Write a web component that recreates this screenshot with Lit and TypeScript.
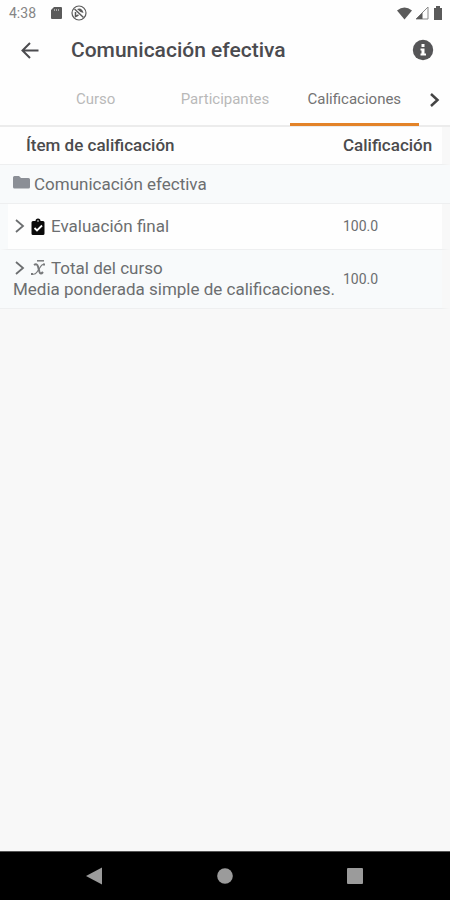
import { LitElement, html, css, svg } from "lit";
import { customElement, state } from "lit/decorators.js";

const TABS = ["Curso", "Participantes", "Calificaciones"];

const chevron = svg`<path d="M3 1 L10 7 L3 13" fill="none" stroke="currentColor" stroke-width="1.800"/>`;

@customElement("app-root")
export class AppRoot extends LitElement {
  @state() private selected = "Calificaciones";

  static styles = css`
    :host {
      display: flex;
      flex-direction: column;
      min-height: 100vh;
      background: #f8f8f8;
      color: #6c6e70;
      font-family: Roboto, "Liberation Sans", sans-serif;
      font-size: 17px;
      line-height: 21px;
    }
    * { box-sizing: border-box; }
    button {
      border: 0;
      padding: 0;
      margin: 0;
      background: none;
      color: inherit;
      font: inherit;
      cursor: pointer;
    }
    svg { display: block; flex: none; }
    .status {
      display: flex;
      align-items: center;
      height: 26px;
      padding: 0 6px 0 9px;
      background: #fefefe;
      color: #5a5a5a;
    }
    .time { font-size: 14px; color: #858585; width: 32px; }
    .left, .right { display: flex; align-items: center; gap: 8px; }
    .right { margin-left: auto; gap: 3px; }
    .bar {
      display: flex;
      align-items: center;
      height: 48px;
      padding: 0 16px;
      background: #fefefe;
      color: #4b4b4f;
    }
    .back { width: 28px; height: 28px; display: grid; place-items: center; }
    .title {
      flex: 1;
      margin: 0 0 0 27px;
      font-size: 21px;
      line-height: 28px;
      font-weight: 500;
      color: #4b4b4f;
    }
    .tabs {
      display: grid;
      grid-template-columns: 31px repeat(3, 1fr) 31px;
      height: 53px;
      background: #fefefe;
      border-bottom: 2px solid #ececec;
    }
    .tab {
      height: 52px;
      border-bottom: 3px solid transparent;
      font-size: 15px;
      color: #b9b9b9;
      padding-top: 2px;
    }
    .tab.active { color: #737373; border-bottom-color: #e38328; }
    .next { grid-column: 5; display: grid; place-items: center; color: #444; }
    .grades { width: 100%; border-collapse: separate; border-spacing: 0; }
    .grades th, .grades td {
      padding: 0;
      text-align: left;
      border-bottom: 1px solid #eeeff0;
      font-weight: 400;
    }
    .grades .value {
      width: 107px;
      border-right: 8px solid #f8f8f8;
      font-size: 14px;
    }
    .head th { height: 38px; background: #fefefe; }
    .grades .head th { font-weight: 500; color: #4b4b4d; font-size: 17px; }
    .head .item { padding-left: 26px; }
    .grades .category th { height: 39px; padding-left: 13px; background: #f8fafb; }
    .grades .entry th { height: 46px; padding-left: 5px; border-left: 8px solid #f8fafb; background: #fefefe; }
    .entry td { background: #fefefe; }
    .grades .total th { height: 59px; padding-left: 13px; background: #f8fafb; }
    .total td { background: #f8fafb; }
    .line { display: flex; align-items: center; }
    .category .line { gap: 4px; }
    .toggle { display: flex; align-items: center; text-align: left; gap: 5px; }
    .nav {
      display: flex;
      justify-content: space-around;
      align-items: center;
      height: 49px;
      margin-top: auto;
      padding: 0 30px;
      background: #000;
      color: #9b9b9b;
      border-top: 1px solid #555;
    }
    .key { width: 48px; height: 40px; display: grid; place-items: center; }
  `;

  private statusBar() {
    return html`
      <div class="status">
        <div class="left">
          <span class="time">4:38</span>
          <svg width="14" height="14" viewBox="0 0 14 14" aria-hidden="true">
            <path d="M5 1h7q1 0 1 1v10q0 1-1 1H3q-1 0-1-1V4z" fill="currentColor"/>
            <path d="M5.500 3v2M7.500 3v2M9.500 3v2" stroke="#aaa"/>
          </svg>
          <svg width="16" height="16" viewBox="0 0 16 16" aria-hidden="true" fill="none" stroke="currentColor">
            <circle cx="8" cy="8" r="7" stroke-width="1.200"/>
            <path d="M3.500 4l9 8.500" stroke-width="1.400"/>
            <path d="M6 4q5-2 6.500 4L9.500 7z" fill="currentColor" stroke="none"/>
            <path d="M4.500 7v4.500l3-1.500" stroke-width="1.500"/>
          </svg>
        </div>
        <div class="right">
          <svg width="15" height="13" viewBox="0 0 15 13" aria-hidden="true">
            <path d="M0 3.500Q7.500-2.500 15 3.500L7.500 12.500z" fill="currentColor"/>
          </svg>
          <svg width="14" height="14" viewBox="0 0 14 14" aria-hidden="true">
            <path d="M1 13L13 1V13z" fill="none" stroke="#8a8a8a"/>
            <path d="M1 13L7.500 6.500V13z" fill="currentColor"/>
          </svg>
          <svg width="12" height="14" viewBox="0 0 12 14" aria-hidden="true" class="battery">
            <path d="M2 2h2V0h4v2h2v12H2z" fill="currentColor"/>
          </svg>
        </div>
      </div>`;
  }

  render() {
    return html`
      ${this.statusBar()}
      <header class="bar">
        <button class="back" aria-label="Atrás">
          <svg width="20" height="18" viewBox="0 0 20 18" fill="none" stroke="currentColor" stroke-width="2">
            <path d="M18.500 9.500H3M10 2L2.500 9.500l7.500 7.500"/>
          </svg>
        </button>
        <h1 class="title">Comunicación efectiva</h1>
        <button aria-label="Información">
          <svg width="22" height="22" viewBox="0 0 22 22">
            <circle cx="11" cy="11" r="10.200" fill="#555557"/>
            <path d="M9.500 5h3v3h-3zM8.500 9.500h4v5h1.500v2H8.500v-2h1v-3h-1z" fill="#fff"/>
          </svg>
        </button>
      </header>
      <nav class="tabs" role="tablist">
        <span></span>
        ${TABS.map(
          (t) => html`<button
            class="tab ${t === this.selected ? "active" : ""}"
            role="tab"
            aria-selected=${t === this.selected}
            @click=${() => (this.selected = t)}
          >${t}</button>`
        )}
        <button class="next" aria-label="Siguiente">
          <svg width="12" height="16" viewBox="0 0 12 16" fill="none" stroke="currentColor" stroke-width="2.500">
            <path d="M3 2l6.500 6L3 14"/>
          </svg>
        </button>
      </nav>
      <table class="grades">
        <thead>
          <tr class="head">
            <th class="item" scope="col">Ítem de calificación</th>
            <th class="value" scope="col">Calificación</th>
          </tr>
        </thead>
        <tbody>
          <tr class="category">
            <th colspan="2" scope="rowgroup">
              <span class="line">
                <svg width="17" height="18" viewBox="0 0 17 18" aria-hidden="true">
                  <path d="M0 2.500Q0 1 1.500 1H6l2 2h7.500Q17 3 17 4.500V12Q17 13.500 15.500 13.500H1.500Q0 13.500 0 12z" fill="#8b8f96"/>
                </svg>
                Comunicación efectiva
              </span>
            </th>
          </tr>
          <tr class="entry">
            <th scope="row">
              <button class="toggle">
                <svg width="12" height="16" viewBox="0 0 12 16">${chevron}</svg>
                <svg width="16" height="18" viewBox="0 0 16 18" aria-hidden="true">
                  <path d="M3 3h2.500a2.500 2.500 0 0 1 5 0H13q1.500 0 1.500 1.500v11q0 1.500-1.500 1.500H3q-1.500 0-1.500-1.500v-11Q1.500 3 3 3z" fill="#0a0a0a"/>
                  <path d="M4.500 10l2.500 2.500 5-5" fill="none" stroke="#fff" stroke-width="1.800"/>
                  <circle cx="8" cy="3" r=".8" fill="#fff"/>
                </svg>
                Evaluación final
              </button>
            </th>
            <td class="value">100.0</td>
          </tr>
          <tr class="total">
            <th scope="row">
              <button class="toggle">
                <svg width="12" height="16" viewBox="0 0 12 16">${chevron}</svg>
                <svg width="16" height="18" viewBox="0 0 16 18" aria-hidden="true" fill="none" stroke="#77797b">
                  <path d="M7 .8h7" stroke-width="1.500"/>
                  <path d="M4 5q3-2 4 1.500l1.500 5.500q1 3 3.500 0" stroke-width="2"/>
                  <path d="M14 4.500q-2-1-4 3l-3 4.500q-2 3-5 2" stroke-width="1.200"/>
                  <path d="M13 4.500h2M1 14H3" stroke-width="1.800"/>
                </svg>
                Total del curso
              </button>
              <div>Media ponderada simple de calificaciones.</div>
            </th>
            <td class="value">100.0</td>
          </tr>
        </tbody>
      </table>
      <div class="nav">
        <button class="key" aria-label="Volver">
          <svg width="18" height="18" viewBox="0 0 18 18"><path d="M0 9L16 .500v17z" fill="currentColor"/></svg>
        </button>
        <button class="key" aria-label="Inicio">
          <svg width="18" height="18" viewBox="0 0 18 18"><circle cx="9" cy="9" r="7.800" fill="currentColor"/></svg>
        </button>
        <button class="key" aria-label="Recientes">
          <svg width="18" height="18" viewBox="0 0 18 18"><rect x="1" y="1" width="16" height="16" rx="1" fill="currentColor"/></svg>
        </button>
      </div>
    `;
  }
}
